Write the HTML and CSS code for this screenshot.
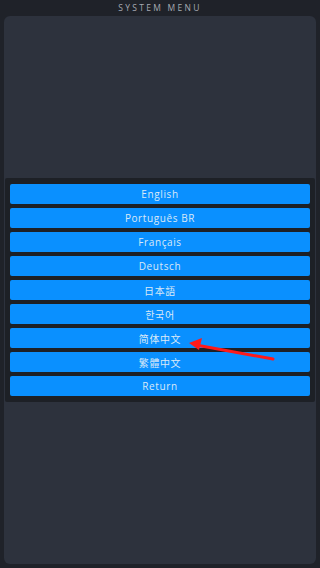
FILE: index.html
```html
<!DOCTYPE html>
<html lang="en">
<head>
    <meta charset="UTF-8">
    <meta name="viewport" content="width=device-width, initial-scale=1.0">
    <title>System Menu</title>
    <link rel="stylesheet" href="styles.css">
</head>
<body>

    <div class="screen">
        <h1 class="title">SYSTEM MENU</h1>

        <div class="panel">
            <div class="menu">
                <button class="item">English</button>
                <button class="item">Português BR</button>
                <button class="item">Français</button>
                <button class="item">Deutsch</button>
                <button class="item">日本語</button>
                <button class="item">한국어</button>
                <button class="item">简体中文</button>
                <button class="item">繁體中文</button>
                <button class="item">Return</button>
            </div>
        </div>

        <!-- annotation pointing at the chinese option -->
        <svg class="arrow" width="320" height="568" viewBox="0 0 320 568">
            <line x1="273" y1="359" x2="196" y2="345" stroke="#ff1a1a" stroke-width="3" stroke-linecap="round"/>
            <polygon points="189,343 202,338 199,350" fill="#ff1a1a"/>
        </svg>
    </div>

</body>
</html>
```

FILE: styles.css
```css
*{
    box-sizing: border-box;
}

body{
    margin: 0;
    background-color: #1f2229;
    font-family: "Open Sans", "Noto Sans CJK SC", sans-serif;
}

.screen{
    position: relative;
    width: 320px;
    height: 568px;
    padding: 0 4px 4px;
    display: flex;
    flex-direction: column;
}

.title{
    margin: 0;
    height: 16px;
    line-height: 15px;
    font-size: 8.5px;
    font-weight: 400;
    letter-spacing: 2.3px;
    text-align: center;
    color: #a6aab2;
}

.panel{
    flex: 1;
    background-color: #2d323d;
    border-radius: 6px;
    padding-top: 162px;
}

.menu{
    margin: 0 1px;
    background-color: #1d2026;
    border-radius: 2px;
    padding: 6px 5px;
    display: flex;
    flex-direction: column;
    gap: 4px;
}

.item{
    height: 20px;
    border: none;
    border-radius: 2px;
    background-color: #0a90ff;
    color: #dbe9f7;
    font-family: "Open Sans", "Noto Sans CJK SC", sans-serif;
    font-size: 10px;
    letter-spacing: 0.6px;
    padding: 0;
}

.arrow{
    position: absolute;
    left: 0;
    top: 0;
    pointer-events: none;
}
```
